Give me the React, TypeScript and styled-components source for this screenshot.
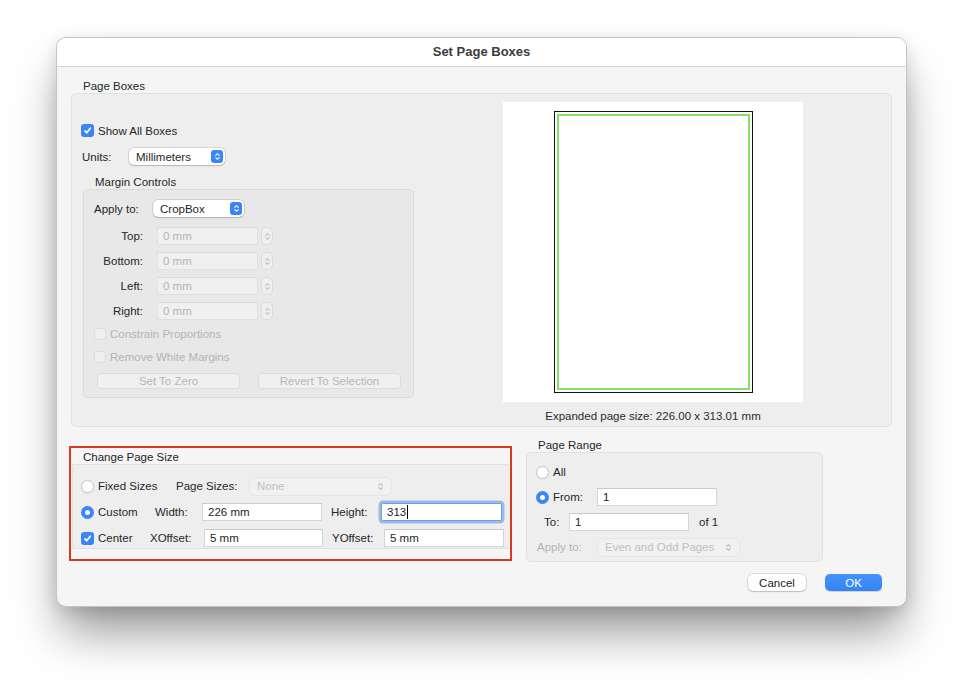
import React from "react";
import styled, { createGlobalStyle, css } from "styled-components";

const BLUE = "#3b86f7";
const TEXT = "#262626";
const DIM = "#b4b4b4";

const GlobalStyle = createGlobalStyle`
  html, body { margin: 0; padding: 0; background: #ffffff; }
  body {
    font-family: "Liberation Sans", Arial, Helvetica, sans-serif;
    font-size: 11.5px;
    color: ${TEXT};
    -webkit-font-smoothing: antialiased;
  }
  *, *::before, *::after { box-sizing: border-box; }
`;

const Desktop = styled.div`
  width: 962px;
  height: 681px;
  padding: 37px 0 0 56px;
  overflow: hidden;
`;

const Window = styled.div`
  width: 851px;
  display: flex;
  flex-direction: column;
  background: #f5f5f5;
  border: 1px solid #c4c4c4;
  border-radius: 10px;
  overflow: hidden;
  box-shadow: 0 30px 48px -6px rgba(0, 0, 0, 0.42), 0 4px 16px rgba(0, 0, 0, 0.12);
`;

const TitleBar = styled.div`
  height: 29px;
  flex: none;
  background: #ffffff;
  border-bottom: 1px solid #d4d4d4;
  display: flex;
  align-items: center;
  justify-content: center;
  padding-bottom: 1px;
  font-weight: bold;
  font-size: 13px;
  color: #3c3c3c;
`;

const Body = styled.div`
  display: flex;
  flex-direction: column;
  padding: 12px 14px 15px 14px;
`;

const GroupTitle = styled.div<{ $indent?: number }>`
  height: 14px;
  line-height: 14px;
  padding-left: ${(p) => p.$indent ?? 12}px;
  white-space: nowrap;
  color: ${TEXT};
`;

const Panel = styled.div<{ $tone?: "outer" | "inner" }>`
  background: ${(p) => (p.$tone === "inner" ? "#e8e8e8" : "#eeeeee")};
  border: 1px solid ${(p) => (p.$tone === "inner" ? "#dadada" : "#e1e1e1")};
  border-radius: 5px;
`;

const PageBoxesPanel = styled(Panel)`
  display: grid;
  grid-template-columns: 332px 300px;
  column-gap: 90px;
  align-items: start;
  padding: 8px 0 3px 9px;
`;

const LeftColumn = styled.div`
  display: flex;
  flex-direction: column;
  padding-top: 22px;
`;

const PreviewColumn = styled.div`
  display: flex;
  flex-direction: column;
  align-items: center;
`;

const PreviewCanvas = styled.div`
  width: 300px;
  height: 300px;
  background: #ffffff;
  display: flex;
  align-items: center;
  justify-content: center;
`;

const MediaBox = styled.div`
  width: 199px;
  height: 282px;
  border: 1px solid #111111;
  padding: 2px;
  display: flex;
`;

const CropOutline = styled.div`
  flex: 1;
  border: 2px solid #86dc69;
`;

const Caption = styled.div`
  margin-top: 7px;
  height: 14px;
  line-height: 14px;
  white-space: nowrap;
  color: #2a2a2a;
`;

const Row = styled.div<{ $mt?: number; $h?: number; $pl?: number }>`
  display: flex;
  align-items: center;
  height: ${(p) => p.$h ?? 18}px;
  margin-top: ${(p) => p.$mt ?? 0}px;
  padding-left: ${(p) => p.$pl ?? 0}px;
`;

const Label = styled.span<{ $w?: number; $right?: boolean; $dim?: boolean; $ml?: number; $mr?: number }>`
  flex: none;
  width: ${(p) => (p.$w ? `${p.$w}px` : "auto")};
  text-align: ${(p) => (p.$right ? "right" : "left")};
  margin-left: ${(p) => p.$ml ?? 0}px;
  margin-right: ${(p) => p.$mr ?? 0}px;
  color: ${(p) => (p.$dim ? DIM : TEXT)};
  white-space: nowrap;
  line-height: 14px;
`;

const Choice = styled.div<{ $w?: number; $dim?: boolean }>`
  flex: none;
  display: flex;
  align-items: center;
  gap: 4px;
  width: ${(p) => (p.$w ? `${p.$w}px` : "auto")};
  color: ${(p) => (p.$dim ? DIM : TEXT)};
  white-space: nowrap;
  line-height: 14px;
`;

const CheckSquare = styled.span<{ $checked?: boolean; $disabled?: boolean }>`
  flex: none;
  width: ${(p) => (p.$checked ? 13 : 12)}px;
  height: ${(p) => (p.$checked ? 13 : 12)}px;
  border-radius: 3px;
  display: inline-flex;
  align-items: center;
  justify-content: center;
  ${(p) =>
    p.$checked
      ? css`
          background: ${BLUE};
        `
      : css`
          background: ${p.$disabled ? "#efefef" : "#ffffff"};
          border: 1px solid ${p.$disabled ? "#dcdcdc" : "#c4c4c4"};
        `}
`;

const RadioDot = styled.span<{ $checked?: boolean }>`
  flex: none;
  width: 13px;
  height: 13px;
  border-radius: 50%;
  display: inline-flex;
  align-items: center;
  justify-content: center;
  background: ${(p) => (p.$checked ? BLUE : "#ffffff")};
  border: ${(p) => (p.$checked ? "none" : "1px solid #c6c6c6")};
  box-shadow: ${(p) => (p.$checked ? "none" : "0 0.5px 1px rgba(0,0,0,0.08)")};
  &::after {
    content: "";
    display: ${(p) => (p.$checked ? "block" : "none")};
    width: 5px;
    height: 5px;
    border-radius: 50%;
    background: #ffffff;
  }
`;

const PopupButton = styled.div<{ $w: number; $disabled?: boolean }>`
  flex: none;
  width: ${(p) => p.$w}px;
  height: 17px;
  border-radius: 5px;
  display: flex;
  align-items: center;
  justify-content: space-between;
  padding: 0 2px 0 7px;
  white-space: nowrap;
  background: ${(p) => (p.$disabled ? "#f1f1f1" : "#ffffff")};
  color: ${(p) => (p.$disabled ? "#c0c0c0" : TEXT)};
  box-shadow: ${(p) =>
    p.$disabled
      ? "0 0 0 0.5px rgba(0,0,0,0.07)"
      : "0 0 0 0.5px rgba(0,0,0,0.2), 0 1px 1.5px rgba(0,0,0,0.15)"};
`;

const PopupArrows = styled.span<{ $disabled?: boolean }>`
  flex: none;
  width: 12px;
  height: 13px;
  border-radius: 3px;
  background: ${(p) => (p.$disabled ? "transparent" : BLUE)};
  display: flex;
  align-items: center;
  justify-content: center;
  margin-right: ${(p) => (p.$disabled ? 3 : 0)}px;
`;

const Field = styled.div<{ $w: number; $disabled?: boolean; $focused?: boolean }>`
  flex: none;
  width: ${(p) => p.$w}px;
  height: 18px;
  padding-left: 5px;
  display: flex;
  align-items: center;
  white-space: nowrap;
  line-height: 14px;
  background: ${(p) => (p.$disabled ? "#f0f0f0" : "#ffffff")};
  color: ${(p) => (p.$disabled ? DIM : "#1e1e1e")};
  border: 1px solid ${(p) => (p.$disabled ? "#e0e0e0" : "#d6d6d6")};
  border-top-color: ${(p) => (p.$disabled ? "#dadada" : "#c9c9c9")};
  ${(p) =>
    p.$focused &&
    css`
      border-color: #6e9fe9;
      border-radius: 2px;
      box-shadow: 0 0 0 2.5px rgba(98, 152, 238, 0.6);
    `}
`;

const Caret = styled.span`
  width: 1px;
  height: 14px;
  background: #000000;
  margin-left: 1px;
`;

const Stepper = styled.div`
  flex: none;
  width: 12px;
  height: 18px;
  margin-left: 3px;
  border-radius: 5px;
  background: #efefef;
  border: 1px solid #dcdcdc;
  display: flex;
  align-items: center;
  justify-content: center;
`;

const PushButton = styled.div<{ $variant?: "default" | "primary" | "disabled"; $w: number }>`
  flex: none;
  width: ${(p) => p.$w}px;
  height: ${(p) => (p.$variant === "disabled" ? 16 : 17)}px;
  border-radius: 5px;
  display: flex;
  align-items: center;
  justify-content: center;
  white-space: nowrap;
  ${(p) =>
    p.$variant === "primary"
      ? css`
          background: linear-gradient(#4693f8, #3283f5);
          color: #ffffff;
          box-shadow: 0 0.5px 1px rgba(0, 0, 0, 0.15);
        `
      : p.$variant === "disabled"
      ? css`
          background: #f0f0f0;
          color: #b6b6b6;
          border: 1px solid #dcdcdc;
          border-radius: 4px;
        `
      : css`
          background: #ffffff;
          color: #222222;
          box-shadow: 0 0 0 0.5px rgba(0, 0, 0, 0.2), 0 1px 1.5px rgba(0, 0, 0, 0.15);
        `}
`;

const MarginSection = styled.div`
  margin-top: 10px;
  margin-left: 2px;
  width: 331px;
  display: flex;
  flex-direction: column;
`;

const MarginPanel = styled(Panel)`
  display: flex;
  flex-direction: column;
  padding: 10px 0 8px 10px;
`;

const ButtonPair = styled.div`
  display: flex;
  gap: 18px;
  margin: 9px 0 0 3px;
`;

const BottomRow = styled.div`
  display: flex;
  align-items: flex-start;
  margin-top: 11px;
`;

const HighlightFrame = styled.div`
  flex: none;
  width: 443px;
  margin: 8px 0 0 -2px;
  border: 2px solid #d5391f;
  padding: 2px 0 10px 0;
  display: flex;
  flex-direction: column;
`;

const SizePanel = styled(Panel)`
  margin-left: 1px;
  border-radius: 2px;
  border-right: none;
  display: flex;
  flex-direction: column;
  gap: 8px;
  padding: 12px 0 1px 8px;
`;

const Spacer = styled.span<{ $w: number }>`
  flex: none;
  width: ${(p) => p.$w}px;
`;

const RangeColumn = styled.div`
  flex: none;
  width: 297px;
  margin-left: 14px;
  display: flex;
  flex-direction: column;
`;

const RangePanel = styled(Panel)`
  display: flex;
  flex-direction: column;
  gap: 7px;
  padding: 10px 0 5px 9px;
`;

const Footer = styled.div`
  display: flex;
  justify-content: flex-end;
  gap: 19px;
  margin-top: 12px;
  padding-right: 10px;
`;

const UpDown = ({ color, size = 8 }: { color: string; size?: number }) => (
  <svg width={size} height={size + 2} viewBox="0 0 8 10" aria-hidden="true">
    <path
      d="M2 3.8 L4 1.8 L6 3.8 M2 6.2 L4 8.2 L6 6.2"
      fill="none"
      stroke={color}
      strokeWidth="1.2"
      strokeLinecap="round"
      strokeLinejoin="round"
    />
  </svg>
);

const Tick = () => (
  <svg width="9" height="9" viewBox="0 0 10 10" aria-hidden="true">
    <path
      d="M2 5.3 L4.1 7.6 L8.1 2.4"
      fill="none"
      stroke="#ffffff"
      strokeWidth="1.8"
      strokeLinecap="round"
      strokeLinejoin="round"
    />
  </svg>
);

const Checkbox = ({ checked, disabled }: { checked?: boolean; disabled?: boolean }) => (
  <CheckSquare $checked={checked} $disabled={disabled}>
    {checked && <Tick />}
  </CheckSquare>
);

const Popup = ({ value, w, disabled }: { value: string; w: number; disabled?: boolean }) => (
  <PopupButton $w={w} $disabled={disabled}>
    <span>{value}</span>
    <PopupArrows $disabled={disabled}>
      <UpDown color={disabled ? "#b9b9b9" : "#ffffff"} size={7} />
    </PopupArrows>
  </PopupButton>
);

const marginFields = ["Top:", "Bottom:", "Left:", "Right:"];

export default function App() {
  return (
    <>
      <GlobalStyle />
      <Desktop>
        <Window>
          <TitleBar>Set Page Boxes</TitleBar>
          <Body>
            <GroupTitle>Page Boxes</GroupTitle>
            <PageBoxesPanel>
              <LeftColumn>
                <Row $h={13}>
                  <Choice>
                    <Checkbox checked />
                    Show All Boxes
                  </Choice>
                </Row>
                <Row $h={17} $mt={11}>
                  <Label $w={47} $ml={1}>Units:</Label>
                  <Popup value="Millimeters" w={96} />
                </Row>
                <MarginSection>
                  <GroupTitle>Margin Controls</GroupTitle>
                  <MarginPanel $tone="inner">
                    <Row $h={17}>
                      <Label $w={59}>Apply to:</Label>
                      <Popup value="CropBox" w={91} />
                    </Row>
                    {marginFields.map((f, i) => (
                      <Row key={f} $mt={i === 0 ? 10 : 7}>
                        <Label $w={49} $right $mr={14}>
                          {f}
                        </Label>
                        <Field $w={101} $disabled>
                          0 mm
                        </Field>
                        <Stepper>
                          <UpDown color="#c2c2c2" size={7} />
                        </Stepper>
                      </Row>
                    ))}
                    <Row $h={14} $mt={7}>
                      <Choice $dim>
                        <Checkbox disabled />
                        Constrain Proportions
                      </Choice>
                    </Row>
                    <Row $h={14} $mt={9}>
                      <Choice $dim>
                        <Checkbox disabled />
                        Remove White Margins
                      </Choice>
                    </Row>
                    <ButtonPair>
                      <PushButton $variant="disabled" $w={143}>
                        Set To Zero
                      </PushButton>
                      <PushButton $variant="disabled" $w={143}>
                        Revert To Selection
                      </PushButton>
                    </ButtonPair>
                  </MarginPanel>
                </MarginSection>
              </LeftColumn>
              <PreviewColumn>
                <PreviewCanvas>
                  <MediaBox>
                    <CropOutline />
                  </MediaBox>
                </PreviewCanvas>
                <Caption>Expanded page size: 226.00 x 313.01 mm</Caption>
              </PreviewColumn>
            </PageBoxesPanel>

            <BottomRow>
              <HighlightFrame>
                <GroupTitle>Change Page Size</GroupTitle>
                <SizePanel>
                  <Row>
                    <Choice $w={95}>
                      <RadioDot />
                      Fixed Sizes
                    </Choice>
                    <Label $w={74}>Page Sizes:</Label>
                    <Popup value="None" w={141} disabled />
                  </Row>
                  <Row>
                    <Choice $w={74}>
                      <RadioDot $checked />
                      Custom
                    </Choice>
                    <Label $w={47}>Width:</Label>
                    <Field $w={120}>226 mm</Field>
                    <Spacer $w={9} />
                    <Label $w={50}>Height:</Label>
                    <Field $w={121} $focused>
                      313
                      <Caret />
                    </Field>
                  </Row>
                  <Row>
                    <Choice $w={69}>
                      <Checkbox checked />
                      Center
                    </Choice>
                    <Label $w={54}>XOffset:</Label>
                    <Field $w={119}>5 mm</Field>
                    <Spacer $w={9} />
                    <Label $w={52}>YOffset:</Label>
                    <Field $w={120}>5 mm</Field>
                  </Row>
                </SizePanel>
              </HighlightFrame>

              <RangeColumn>
                <GroupTitle>Page Range</GroupTitle>
                <RangePanel>
                  <Row>
                    <Choice>
                      <RadioDot />
                      All
                    </Choice>
                  </Row>
                  <Row>
                    <Choice $w={61}>
                      <RadioDot $checked />
                      From:
                    </Choice>
                    <Field $w={120}>1</Field>
                  </Row>
                  <Row>
                    <Label $w={25} $ml={8}>To:</Label>
                    <Field $w={120}>1</Field>
                    <Label $ml={10}>of 1</Label>
                  </Row>
                  <Row>
                    <Label $w={61} $dim $ml={1}>Apply to:</Label>
                    <Popup value="Even and Odd Pages" w={141} disabled />
                  </Row>
                </RangePanel>
              </RangeColumn>
            </BottomRow>

            <Footer>
              <PushButton $w={58}>Cancel</PushButton>
              <PushButton $variant="primary" $w={57}>
                OK
              </PushButton>
            </Footer>
          </Body>
        </Window>
      </Desktop>
    </>
  );
}
